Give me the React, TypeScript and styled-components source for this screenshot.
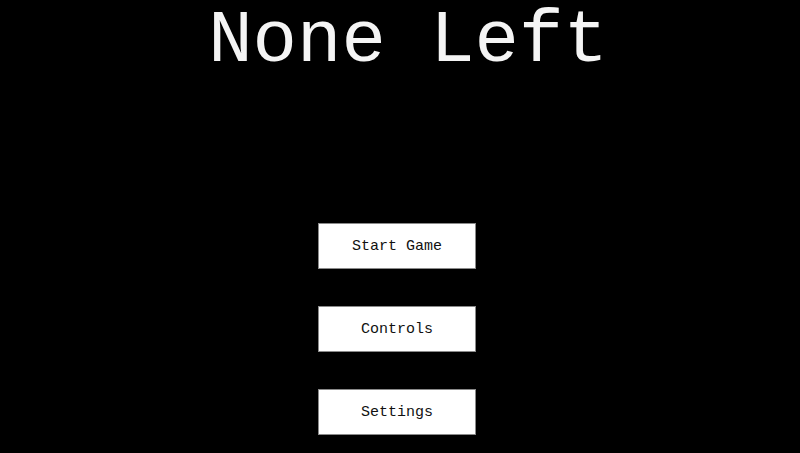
import styled, { createGlobalStyle } from "styled-components"

const GlobalStyle = createGlobalStyle`
  html, body {
    margin: 0;
    padding: 0;
    background: #000;
  }
`

const Screen = styled.div`
  width: 100vw;
  height: 100vh;
  background: #000;
  display: flex;
  flex-direction: column;
  align-items: center;
  overflow: hidden;
  font-family: "Liberation Mono", "DejaVu Sans Mono", monospace;
`

const Title = styled.h1`
  margin: 0;
  padding-left: 16px;
  color: #f4f4f4;
  font-family: inherit;
  font-weight: normal;
  font-size: 74px;
  line-height: 82px;
`

const Menu = styled.div`
  margin-top: 141px;
  padding-right: 6px;
  display: flex;
  flex-direction: column;
  gap: 37px;
`

const MenuButton = styled.button`
  width: 158px;
  height: 46px;
  background: #fff;
  border: 1px solid #8a8a8a;
  color: #111;
  font-family: inherit;
  font-size: 15px;
  cursor: pointer;
`

export default function App() {
  return (
    <>
      <GlobalStyle />
      <Screen>
        <Title>None Left</Title>
        <Menu>
          <MenuButton>Start Game</MenuButton>
          <MenuButton>Controls</MenuButton>
          <MenuButton>Settings</MenuButton>
        </Menu>
      </Screen>
    </>
  )
}
